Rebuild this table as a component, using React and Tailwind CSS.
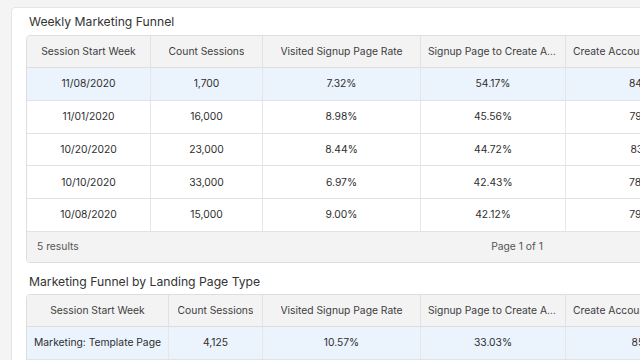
const weekly = [
  ['11/08/2020', '1,700', '7.32%', '54.17%', '84.62%'],
  ['11/01/2020', '16,000', '8.98%', '45.56%', '79.27%'],
  ['10/20/2020', '23,000', '8.44%', '44.72%', '83.15%'],
  ['10/10/2020', '33,000', '6.97%', '42.43%', '78.40%'],
  ['10/08/2020', '15,000', '9.00%', '42.12%', '79.88%'],
];

const landing = [
  ['Marketing: Template Page', '4,125', '10.57%', '33.03%', '85.11%'],
  ['Marketing: Home Page', '9,870', '8.21%', '41.60%', '80.02%'],
];

const headers = [
  'Session Start Week',
  'Count Sessions',
  'Visited Signup Page Rate',
  'Signup Page to Create Account Rate',
  'Create Account to Activation Rate',
];

function FunnelTable({ rows, widths, footer }) {
  return (
    <div className="w-[982px] border border-[#dedede] rounded-[4px] overflow-hidden">
      <div className="flex h-[32px] bg-[#f3f3f3] border-b border-[#dedede] text-[#3d3d3d]">
        {headers.map((h, i) => (
          <div
            key={h}
            style={{ width: widths[i] }}
            className="shrink-0 flex items-center justify-center px-[7px] border-r border-[#e2e2e2]"
          >
            <span className="truncate">{h}</span>
          </div>
        ))}
      </div>
      {rows.map((r, ri) => (
        <div
          key={ri}
          className={`flex h-[32.8px] border-b border-[#e2e2e2] text-[#2e2e2e] ${ri === 0 ? 'bg-[#ebf3fd]' : 'bg-white'}`}
        >
          {r.map((c, i) => (
            <div
              key={i}
              style={{ width: widths[i] }}
              className="shrink-0 flex items-center justify-center px-[4px] border-r border-[#e6e6e6]"
            >
              <span className="truncate">{c}</span>
            </div>
          ))}
        </div>
      ))}
      {footer && (
        <div className="relative flex items-center h-[30px] bg-[#f3f3f3] text-[#555] px-[10px]">
          <span>5 results</span>
          <span className="absolute left-0 right-0 text-center">Page 1 of 1</span>
        </div>
      )}
    </div>
  );
}

export default function App() {
  return (
    <div
      className="h-screen overflow-hidden bg-[#f4f4f4] pl-[11px] pt-[7px] text-[10.3px]"
      style={{ fontFamily: 'Inter, "Noto Sans", sans-serif' }}
    >
      <div className="w-[1010px] bg-white border border-[#e4e4e4] rounded-[4px] pl-[14px] pt-[6px] pb-4">
        <h2 className="pl-[3px] text-[12.2px] leading-[16px] text-[#333] mb-[5px]">Weekly Marketing Funnel</h2>
        <FunnelTable rows={weekly} widths={[124, 112, 158, 145, 165]} footer />

        <h2 className="pl-[3px] mt-[11px] text-[12.2px] leading-[16px] text-[#333] mb-[4px]">
          Marketing Funnel by Landing Page Type
        </h2>
        <FunnelTable rows={landing} widths={[142, 94, 158, 145, 165]} />
      </div>
    </div>
  );
}
